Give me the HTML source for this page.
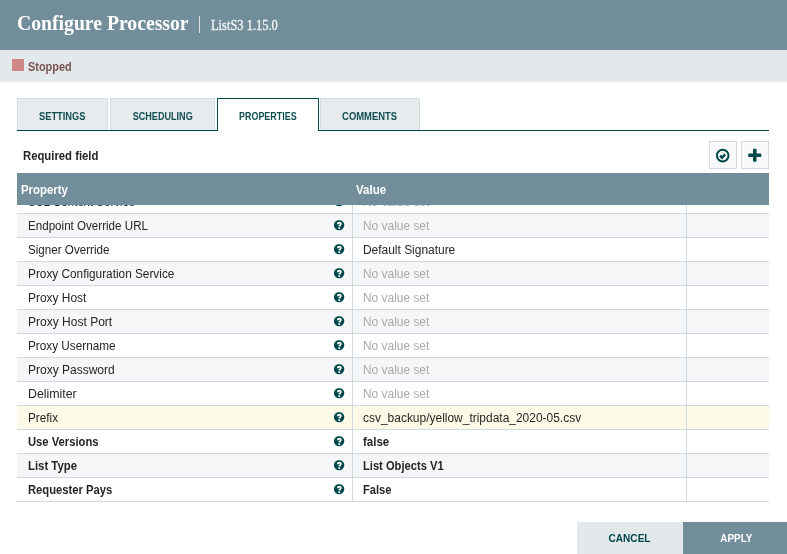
<!DOCTYPE html>
<html><head><meta charset="utf-8">
<style>
*{margin:0;padding:0;box-sizing:border-box}
html,body{width:787px;height:554px;overflow:hidden;background:#fff;font-family:"Liberation Sans",sans-serif;position:relative}
.abs{position:absolute;white-space:nowrap}
#hdr{left:0;top:0;width:787px;height:50px;background:#728e9b}
#title{left:17px;top:11px;font-family:"Liberation Serif",serif;font-weight:bold;font-size:20px;line-height:24px;color:#fff;transform:scaleX(0.985);transform-origin:0 0}
#sep{left:199px;top:16px;width:1px;height:17px;background:rgba(255,255,255,0.75)}
#ver{left:211px;top:17px;font-family:"Liberation Serif",serif;font-size:14px;line-height:18px;color:#f4f6f7;-webkit-text-stroke:0.3px #f4f6f7;transform:scaleX(0.89);transform-origin:0 0}
#status{left:0;top:50px;width:787px;height:32px;background:#e3e8eb}
#sq{left:12px;top:59px;width:12px;height:12px;background:#d18686}
#stopped{left:28px;top:59px;font-weight:bold;font-size:12.5px;line-height:16px;color:#775351;transform:scaleX(0.874);transform-origin:0 0}
.tab{position:absolute;top:98px;height:32px;background:#e7ebed;border:1px solid #d3dcde;border-bottom:none;color:#0f4f52;font-weight:bold;font-size:10.5px;line-height:35px;text-align:center}
.tab span{display:inline-block;transform:scaleX(0.875)}
.tab.active{background:#fff;border:1px solid #004849;border-bottom:none;height:33px;z-index:2}
#tabline{left:17px;top:130px;width:752px;height:1px;background:#004849}
#req{left:23px;top:148px;font-weight:bold;font-size:12.5px;line-height:16px;color:#262626;transform:scaleX(0.905);transform-origin:0 0}
.btn{position:absolute;top:141px;width:28px;height:28px;background:#f8f9fa;border:1px solid #d4dadd}
#thead{left:17px;top:173px;width:752px;height:32px;background:#728e9b;z-index:3}
.th{position:absolute;top:182px;font-weight:bold;font-size:12.5px;line-height:16px;color:#fff;transform-origin:0 0}
#grid{left:17px;top:190px;width:752px;height:312px;overflow:hidden}
.row{position:absolute;left:0;width:752px;height:24px;border-bottom:1px solid #cfd9df;background:#fff}
.row.odd{background:#f4f6f7}
.row.sel{background:#fdf9e7}
.c1,.c2,.c3{position:absolute;top:1px;height:23px;line-height:23px;font-size:12px;color:#262626;transform:scaleX(0.97);transform-origin:0 0}
.c1.b,.c2.b{transform:scaleX(0.94)}
.c1{left:11px}
.c2{left:346px}
.unset{color:#aaa}
.b{font-weight:bold}
.vl{position:absolute;top:0;width:1px;height:24px;background:#cfd9df}
.help{position:absolute;left:316px;top:4px;width:13px;height:13px}
#cancel{left:577px;top:522px;width:106px;height:32px;background:#e3e8eb;color:#004849;font-weight:bold;font-size:11.3px;line-height:33px;text-align:center}
#apply{left:683px;top:522px;width:106px;height:32px;background:#728e9b;color:#fff;font-weight:bold;font-size:11.3px;line-height:33px;text-align:center}
</style></head><body><div id="wrap" style="position:absolute;left:0;top:0;width:787px;height:554px;will-change:transform">
<div id="hdr" class="abs"></div>
<div id="title" class="abs">Configure Processor</div>
<div id="sep" class="abs"></div>
<div id="ver" class="abs">ListS3 1.15.0</div>
<div id="status" class="abs"></div>
<div id="sq" class="abs"></div>
<div id="stopped" class="abs">Stopped</div>

<div class="tab" style="left:17px;width:91px"><span style="transform:scaleX(0.886)">SETTINGS</span></div>
<div class="tab" style="left:110px;width:105px"><span style="transform:scaleX(0.865)">SCHEDULING</span></div>
<div class="tab active" style="left:217px;width:102px"><span style="transform:scaleX(0.852)">PROPERTIES</span></div>
<div class="tab" style="left:320px;width:100px"><span style="transform:scaleX(0.898)">COMMENTS</span></div>
<div id="tabline" class="abs"></div>

<div id="req" class="abs">Required field</div>
<div class="btn" style="left:709px">
<svg width="26" height="26" viewBox="0 0 26 26" style="position:absolute;left:0;top:0"><circle cx="12.7" cy="13.6" r="5.8" fill="none" stroke="#004849" stroke-width="2"/><path d="M10.0 13.6 L12.1 15.7 L15.2 12.4" fill="none" stroke="#004849" stroke-width="2.4"/></svg>
</div>
<div class="btn" style="left:741px">
<svg width="26" height="26" viewBox="0 0 26 26" style="position:absolute;left:0;top:0"><rect x="6.2" y="11.5" width="13.1" height="3.5" rx="1" fill="#004849"/><rect x="11.0" y="6.8" width="3.6" height="12.9" rx="1" fill="#004849"/></svg>
</div>

<div id="thead" class="abs"></div>
<div class="th" style="left:21px;z-index:4;transform:scaleX(0.91)">Property</div>
<div class="th" style="left:356px;z-index:4;transform:scaleX(0.92)">Value</div>

<div id="grid" class="abs">
<div class="row" style="top:0px"><div class="c1" style="transform:scaleX(0.97)">SSL Context Service</div><svg class="help" viewBox="0 0 13 13"><circle cx="6.1" cy="7.1" r="5.2" fill="#004849"/><path d="M4.7 6.2 C4.7 5.2 5.4 4.7 6.3 4.7 C7.2 4.7 7.9 5.3 7.9 6.0 C7.9 7.0 6.2 7.2 6.2 8.6" fill="none" stroke="#fff" stroke-width="1.7"/><rect x="5.35" y="9.4" width="1.75" height="1.6" fill="#fff"/></svg><div class="vl" style="left:335px"></div><div class="c2 unset" style="transform:scaleX(0.994)">No value set</div><div class="vl" style="left:669px"></div></div>
<div class="row odd" style="top:24px"><div class="c1" style="transform:scaleX(0.967)">Endpoint Override URL</div><svg class="help" viewBox="0 0 13 13"><circle cx="6.1" cy="7.1" r="5.2" fill="#004849"/><path d="M4.7 6.2 C4.7 5.2 5.4 4.7 6.3 4.7 C7.2 4.7 7.9 5.3 7.9 6.0 C7.9 7.0 6.2 7.2 6.2 8.6" fill="none" stroke="#fff" stroke-width="1.7"/><rect x="5.35" y="9.4" width="1.75" height="1.6" fill="#fff"/></svg><div class="vl" style="left:335px"></div><div class="c2 unset" style="transform:scaleX(0.994)">No value set</div><div class="vl" style="left:669px"></div></div>
<div class="row" style="top:48px"><div class="c1" style="transform:scaleX(0.969)">Signer Override</div><svg class="help" viewBox="0 0 13 13"><circle cx="6.1" cy="7.1" r="5.2" fill="#004849"/><path d="M4.7 6.2 C4.7 5.2 5.4 4.7 6.3 4.7 C7.2 4.7 7.9 5.3 7.9 6.0 C7.9 7.0 6.2 7.2 6.2 8.6" fill="none" stroke="#fff" stroke-width="1.7"/><rect x="5.35" y="9.4" width="1.75" height="1.6" fill="#fff"/></svg><div class="vl" style="left:335px"></div><div class="c2" style="transform:scaleX(0.995)">Default Signature</div><div class="vl" style="left:669px"></div></div>
<div class="row odd" style="top:72px"><div class="c1" style="transform:scaleX(0.984)">Proxy Configuration Service</div><svg class="help" viewBox="0 0 13 13"><circle cx="6.1" cy="7.1" r="5.2" fill="#004849"/><path d="M4.7 6.2 C4.7 5.2 5.4 4.7 6.3 4.7 C7.2 4.7 7.9 5.3 7.9 6.0 C7.9 7.0 6.2 7.2 6.2 8.6" fill="none" stroke="#fff" stroke-width="1.7"/><rect x="5.35" y="9.4" width="1.75" height="1.6" fill="#fff"/></svg><div class="vl" style="left:335px"></div><div class="c2 unset" style="transform:scaleX(0.994)">No value set</div><div class="vl" style="left:669px"></div></div>
<div class="row" style="top:96px"><div class="c1" style="transform:scaleX(0.993)">Proxy Host</div><svg class="help" viewBox="0 0 13 13"><circle cx="6.1" cy="7.1" r="5.2" fill="#004849"/><path d="M4.7 6.2 C4.7 5.2 5.4 4.7 6.3 4.7 C7.2 4.7 7.9 5.3 7.9 6.0 C7.9 7.0 6.2 7.2 6.2 8.6" fill="none" stroke="#fff" stroke-width="1.7"/><rect x="5.35" y="9.4" width="1.75" height="1.6" fill="#fff"/></svg><div class="vl" style="left:335px"></div><div class="c2 unset" style="transform:scaleX(0.994)">No value set</div><div class="vl" style="left:669px"></div></div>
<div class="row odd" style="top:120px"><div class="c1" style="transform:scaleX(1.002)">Proxy Host Port</div><svg class="help" viewBox="0 0 13 13"><circle cx="6.1" cy="7.1" r="5.2" fill="#004849"/><path d="M4.7 6.2 C4.7 5.2 5.4 4.7 6.3 4.7 C7.2 4.7 7.9 5.3 7.9 6.0 C7.9 7.0 6.2 7.2 6.2 8.6" fill="none" stroke="#fff" stroke-width="1.7"/><rect x="5.35" y="9.4" width="1.75" height="1.6" fill="#fff"/></svg><div class="vl" style="left:335px"></div><div class="c2 unset" style="transform:scaleX(0.994)">No value set</div><div class="vl" style="left:669px"></div></div>
<div class="row" style="top:144px"><div class="c1" style="transform:scaleX(0.98)">Proxy Username</div><svg class="help" viewBox="0 0 13 13"><circle cx="6.1" cy="7.1" r="5.2" fill="#004849"/><path d="M4.7 6.2 C4.7 5.2 5.4 4.7 6.3 4.7 C7.2 4.7 7.9 5.3 7.9 6.0 C7.9 7.0 6.2 7.2 6.2 8.6" fill="none" stroke="#fff" stroke-width="1.7"/><rect x="5.35" y="9.4" width="1.75" height="1.6" fill="#fff"/></svg><div class="vl" style="left:335px"></div><div class="c2 unset" style="transform:scaleX(0.994)">No value set</div><div class="vl" style="left:669px"></div></div>
<div class="row odd" style="top:168px"><div class="c1" style="transform:scaleX(1.0)">Proxy Password</div><svg class="help" viewBox="0 0 13 13"><circle cx="6.1" cy="7.1" r="5.2" fill="#004849"/><path d="M4.7 6.2 C4.7 5.2 5.4 4.7 6.3 4.7 C7.2 4.7 7.9 5.3 7.9 6.0 C7.9 7.0 6.2 7.2 6.2 8.6" fill="none" stroke="#fff" stroke-width="1.7"/><rect x="5.35" y="9.4" width="1.75" height="1.6" fill="#fff"/></svg><div class="vl" style="left:335px"></div><div class="c2 unset" style="transform:scaleX(0.994)">No value set</div><div class="vl" style="left:669px"></div></div>
<div class="row" style="top:192px"><div class="c1" style="transform:scaleX(1.028)">Delimiter</div><svg class="help" viewBox="0 0 13 13"><circle cx="6.1" cy="7.1" r="5.2" fill="#004849"/><path d="M4.7 6.2 C4.7 5.2 5.4 4.7 6.3 4.7 C7.2 4.7 7.9 5.3 7.9 6.0 C7.9 7.0 6.2 7.2 6.2 8.6" fill="none" stroke="#fff" stroke-width="1.7"/><rect x="5.35" y="9.4" width="1.75" height="1.6" fill="#fff"/></svg><div class="vl" style="left:335px"></div><div class="c2 unset" style="transform:scaleX(0.994)">No value set</div><div class="vl" style="left:669px"></div></div>
<div class="row sel" style="top:216px"><div class="c1" style="transform:scaleX(0.98)">Prefix</div><svg class="help" viewBox="0 0 13 13"><circle cx="6.1" cy="7.1" r="5.2" fill="#004849"/><path d="M4.7 6.2 C4.7 5.2 5.4 4.7 6.3 4.7 C7.2 4.7 7.9 5.3 7.9 6.0 C7.9 7.0 6.2 7.2 6.2 8.6" fill="none" stroke="#fff" stroke-width="1.7"/><rect x="5.35" y="9.4" width="1.75" height="1.6" fill="#fff"/></svg><div class="vl" style="left:335px"></div><div class="c2" style="transform:scaleX(0.997)">csv_backup/yellow_tripdata_2020-05.csv</div><div class="vl" style="left:669px"></div></div>
<div class="row" style="top:240px"><div class="c1 b" style="transform:scaleX(0.935)">Use Versions</div><svg class="help" viewBox="0 0 13 13"><circle cx="6.1" cy="7.1" r="5.2" fill="#004849"/><path d="M4.7 6.2 C4.7 5.2 5.4 4.7 6.3 4.7 C7.2 4.7 7.9 5.3 7.9 6.0 C7.9 7.0 6.2 7.2 6.2 8.6" fill="none" stroke="#fff" stroke-width="1.7"/><rect x="5.35" y="9.4" width="1.75" height="1.6" fill="#fff"/></svg><div class="vl" style="left:335px"></div><div class="c2 b" style="transform:scaleX(0.959)">false</div><div class="vl" style="left:669px"></div></div>
<div class="row odd" style="top:264px"><div class="c1 b" style="transform:scaleX(0.947)">List Type</div><svg class="help" viewBox="0 0 13 13"><circle cx="6.1" cy="7.1" r="5.2" fill="#004849"/><path d="M4.7 6.2 C4.7 5.2 5.4 4.7 6.3 4.7 C7.2 4.7 7.9 5.3 7.9 6.0 C7.9 7.0 6.2 7.2 6.2 8.6" fill="none" stroke="#fff" stroke-width="1.7"/><rect x="5.35" y="9.4" width="1.75" height="1.6" fill="#fff"/></svg><div class="vl" style="left:335px"></div><div class="c2 b" style="transform:scaleX(0.93)">List Objects V1</div><div class="vl" style="left:669px"></div></div>
<div class="row" style="top:288px"><div class="c1 b" style="transform:scaleX(0.937)">Requester Pays</div><svg class="help" viewBox="0 0 13 13"><circle cx="6.1" cy="7.1" r="5.2" fill="#004849"/><path d="M4.7 6.2 C4.7 5.2 5.4 4.7 6.3 4.7 C7.2 4.7 7.9 5.3 7.9 6.0 C7.9 7.0 6.2 7.2 6.2 8.6" fill="none" stroke="#fff" stroke-width="1.7"/><rect x="5.35" y="9.4" width="1.75" height="1.6" fill="#fff"/></svg><div class="vl" style="left:335px"></div><div class="c2 b" style="transform:scaleX(0.93)">False</div><div class="vl" style="left:669px"></div></div>
</div>

<div id="cancel" class="abs"><span style="display:inline-block;transform:scaleX(0.89)">CANCEL</span></div>
<div id="apply" class="abs"><span style="display:inline-block;transform:scaleX(0.88)">APPLY</span></div>
</div></body></html>
